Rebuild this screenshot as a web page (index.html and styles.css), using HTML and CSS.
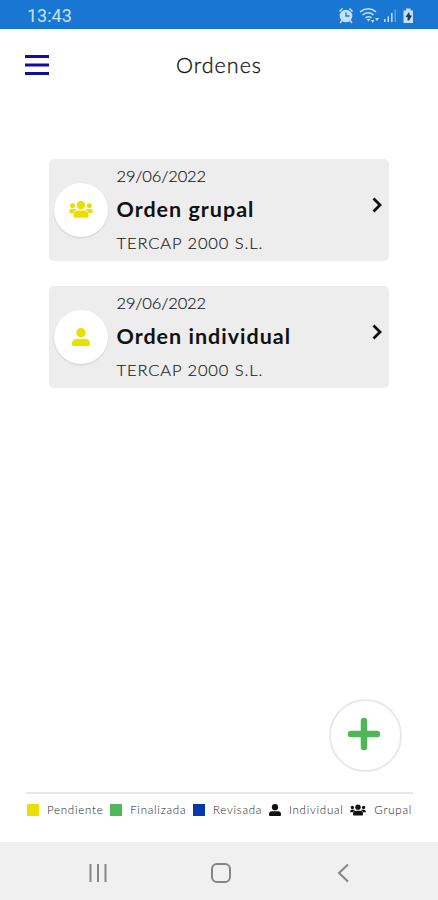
FILE: index.html
```html
<!DOCTYPE html>
<html lang="es">
<head>
<meta charset="utf-8">
<title>Ordenes</title>
<link rel="stylesheet" href="styles.css">
</head>
<body>
<svg class="defs" width="0" height="0">
  <symbol id="group" viewBox="0 0 24 17">
    <circle cx="12" cy="4.200" r="4.100"/><circle cx="3.600" cy="4.800" r="2.500"/><circle cx="20.400" cy="4.800" r="2.500"/>
    <path d="M4.500 15v-1q0-4.500 4.500-4.500h6q4.500 0 4.500 4.500v1q0 1.800-1.500 1.800H6Q4.500 16.800 4.500 15zM.3 12v-1.500q0-2.500 2.500-2.500h3.500q.8 0 1.400.5Q5 9.500 4.500 12zM23.700 12v-1.500q0-2.500-2.500-2.500h-3.500q-.8 0-1.400.5Q19 9.500 19.500 12z"/>
  </symbol>
  <symbol id="person" viewBox="0 0 18 18">
    <circle cx="9" cy="4.700" r="4.700"/><path d="M0 16v-.5q0-4.500 4.500-4.500h9q4.500 0 4.500 4.500v.5q0 2-1.500 2h-15Q0 18 0 16z"/>
  </symbol>
</svg>
<div class="status">
  <span class="time">13:43</span>
  <svg class="status-icons" width="76" height="18" viewBox="0 0 76 18">
    <g fill="none" stroke="#c5e0fa" stroke-width="1.500">
      <circle cx="8" cy="9" r="5.600" fill="#c5e0fa"/><path d="M1.500 4.500l3-3M14.500 4.500l-3-3M4 13.500l-2 2.500M12 13.500l2 2.500"/>
      <path stroke="#1976d2" stroke-width="1.300" d="M8 5.500V9h3.500"/>
      <path d="M22 4.800q8.500-6 16 0M24.500 8q6-4.500 11 0M27.500 11q3-2.500 6 0"/>
      <path d="M46.800 15v-3M50.300 15V9.500M53.800 15V6"/><path d="M57.300 15V2.500" opacity=".4"/>
    </g>
    <g fill="#c5e0fa"><path d="M28.500 12h4l-2 2.500zM33 13h3.500l-1.750 3zM37 11h4l-2 3z"/><path d="M68 1.500h4.500v2H75v12.500h-9.500V3.500H68z"/></g>
    <path fill="#173b68" d="M71 5l-3.500 5h2v3.500h1.500l3-5h-2z"/>
  </svg>
</div>
<header class="header">
  <svg class="menu" width="24" height="22" viewBox="0 0 24 22"><path d="M0 2.500h24M0 11h24M0 19.500h24" stroke="#10109a" stroke-width="3.200"/></svg>
  <h1 class="title">Ordenes</h1>
</header>
<main class="orders">
  <article class="card">
    <div class="avatar"><svg width="24" height="17"><use href="#group"/></svg></div>
    <div class="info"><div class="date">29/06/2022</div><h2 class="name">Orden grupal</h2><div class="client">TERCAP 2000 S.L.</div></div>
    <svg class="chevron" width="11" height="16" viewBox="0 0 11 16"><path d="M1.500 1.500L8 8l-6.500 6.500" fill="none" stroke="#111" stroke-width="2.800"/></svg>
  </article>
  <article class="card">
    <div class="avatar"><svg width="18" height="18"><use href="#person"/></svg></div>
    <div class="info"><div class="date">29/06/2022</div><h2 class="name">Orden individual</h2><div class="client">TERCAP 2000 S.L.</div></div>
    <svg class="chevron" width="11" height="16" viewBox="0 0 11 16"><path d="M1.500 1.500L8 8l-6.500 6.500" fill="none" stroke="#111" stroke-width="2.800"/></svg>
  </article>
</main>
<div class="actions">
  <div class="add"><svg width="34" height="34" viewBox="0 0 34 34"><path d="M17 4v26M4 17h26" stroke="#50b657" stroke-width="6.500" stroke-linecap="round"/></svg></div>
</div>
<footer class="legend">
  <div class="item pending"><i class="swatch"></i><span>Pendiente</span></div>
  <div class="item done"><i class="swatch"></i><span>Finalizada</span></div>
  <div class="item reviewed"><i class="swatch"></i><span>Revisada</span></div>
  <div class="item single"><svg width="12" height="12"><use href="#person"/></svg><span>Individual</span></div>
  <div class="item team"><svg width="16" height="12"><use href="#group"/></svg><span>Grupal</span></div>
</footer>
<nav class="navbar">
  <svg width="20" height="20" viewBox="0 0 20 20"><path d="M2.500 1v18M10 1v18M17.500 1v18" stroke="#858585" stroke-width="2"/></svg>
  <svg width="22" height="22" viewBox="0 0 22 22"><rect x="2" y="2" width="18" height="18" rx="5" fill="none" stroke="#858585" stroke-width="2"/></svg>
  <svg width="20" height="20" viewBox="0 0 20 20"><path d="M14 1.500L5 10l9 8.500" fill="none" stroke="#858585" stroke-width="2"/></svg>
</nav>
</body>
</html>
```

FILE: styles.css
```css
* { box-sizing: border-box; }
body { margin: 0; width: 438px; height: 900px; display: flex; flex-direction: column; background: #fff; color: #111; font-family: Lato, sans-serif; overflow: hidden; }
svg { display: block; flex: none; }
.defs { position: absolute; }
h1, h2 { margin: 0; }
.status { height: 29px; flex: none; background: #1976d2; display: flex; align-items: center; justify-content: space-between; padding: 2px 24px 0 27px; }
.time { font: 18px/20px Roboto, sans-serif; color: #c5e0fa; }
.header { height: 72px; flex: none; display: grid; grid-template-columns: 24px 1fr 24px; align-items: center; padding: 0 25px; }
.title { font-size: 21.5px; line-height: 26px; font-weight: 300; letter-spacing: 1px; text-align: center; -webkit-text-stroke: .3px; }
.orders { flex: 1; padding: 57.5px 49px 0; display: flex; flex-direction: column; gap: 25px; }
.card { height: 102px; flex: none; background: #ededed; border-radius: 5px; display: flex; align-items: center; padding: 0 6px 0 5px; }
.avatar { width: 54px; height: 54px; flex: none; border-radius: 50%; background: #fff; box-shadow: 0 1px 2px #0002; display: flex; align-items: center; justify-content: center; fill: #e9e000; }
.info { flex: 1; padding-left: 8.5px; white-space: nowrap; }
.date, .client { font-size: 16.5px; line-height: 20px; font-weight: 300; color: #222; -webkit-text-stroke: .2px; }
.date { margin-bottom: 10px; letter-spacing: -.15px; }
.client { letter-spacing: .9px; }
.name { font-size: 21.500px; line-height: 27px; font-weight: 700; letter-spacing: 1px; margin-bottom: 10px; }
.chevron { margin-bottom: 10px; }
.info { margin-top: -1px; }
.actions { height: 93px; flex: none; display: flex; justify-content: flex-end; padding-right: 36px; }
.add { width: 73px; height: 73px; border: 2px solid #e9e9e9; border-radius: 50%; display: flex; align-items: center; justify-content: center; padding-right: 3px; padding-bottom: 3px; }
.legend { height: 50px; flex: none; margin: 0 25px 0 26px; border-top: 2px solid #e7e7e7; display: flex; justify-content: space-between; align-items: flex-start; padding: 8px 1px 0 1px; font-size: 11.500px; line-height: 14px; font-weight: 300; letter-spacing: .75px; color: #222; white-space: nowrap; }
.item { display: flex; align-items: center; gap: 8px; fill: #111; }
.item span { padding-top: 1px; }
.swatch { width: 12px; height: 12px; }
.pending .swatch { background: #eadf00; }
.done .swatch { background: #50b657; }
.reviewed .swatch { background: #0739ad; }
.navbar { height: 58px; flex: none; background: #f0f0f0; display: flex; align-items: center; justify-content: space-between; padding: 3px 84px 0 88px; }
```
